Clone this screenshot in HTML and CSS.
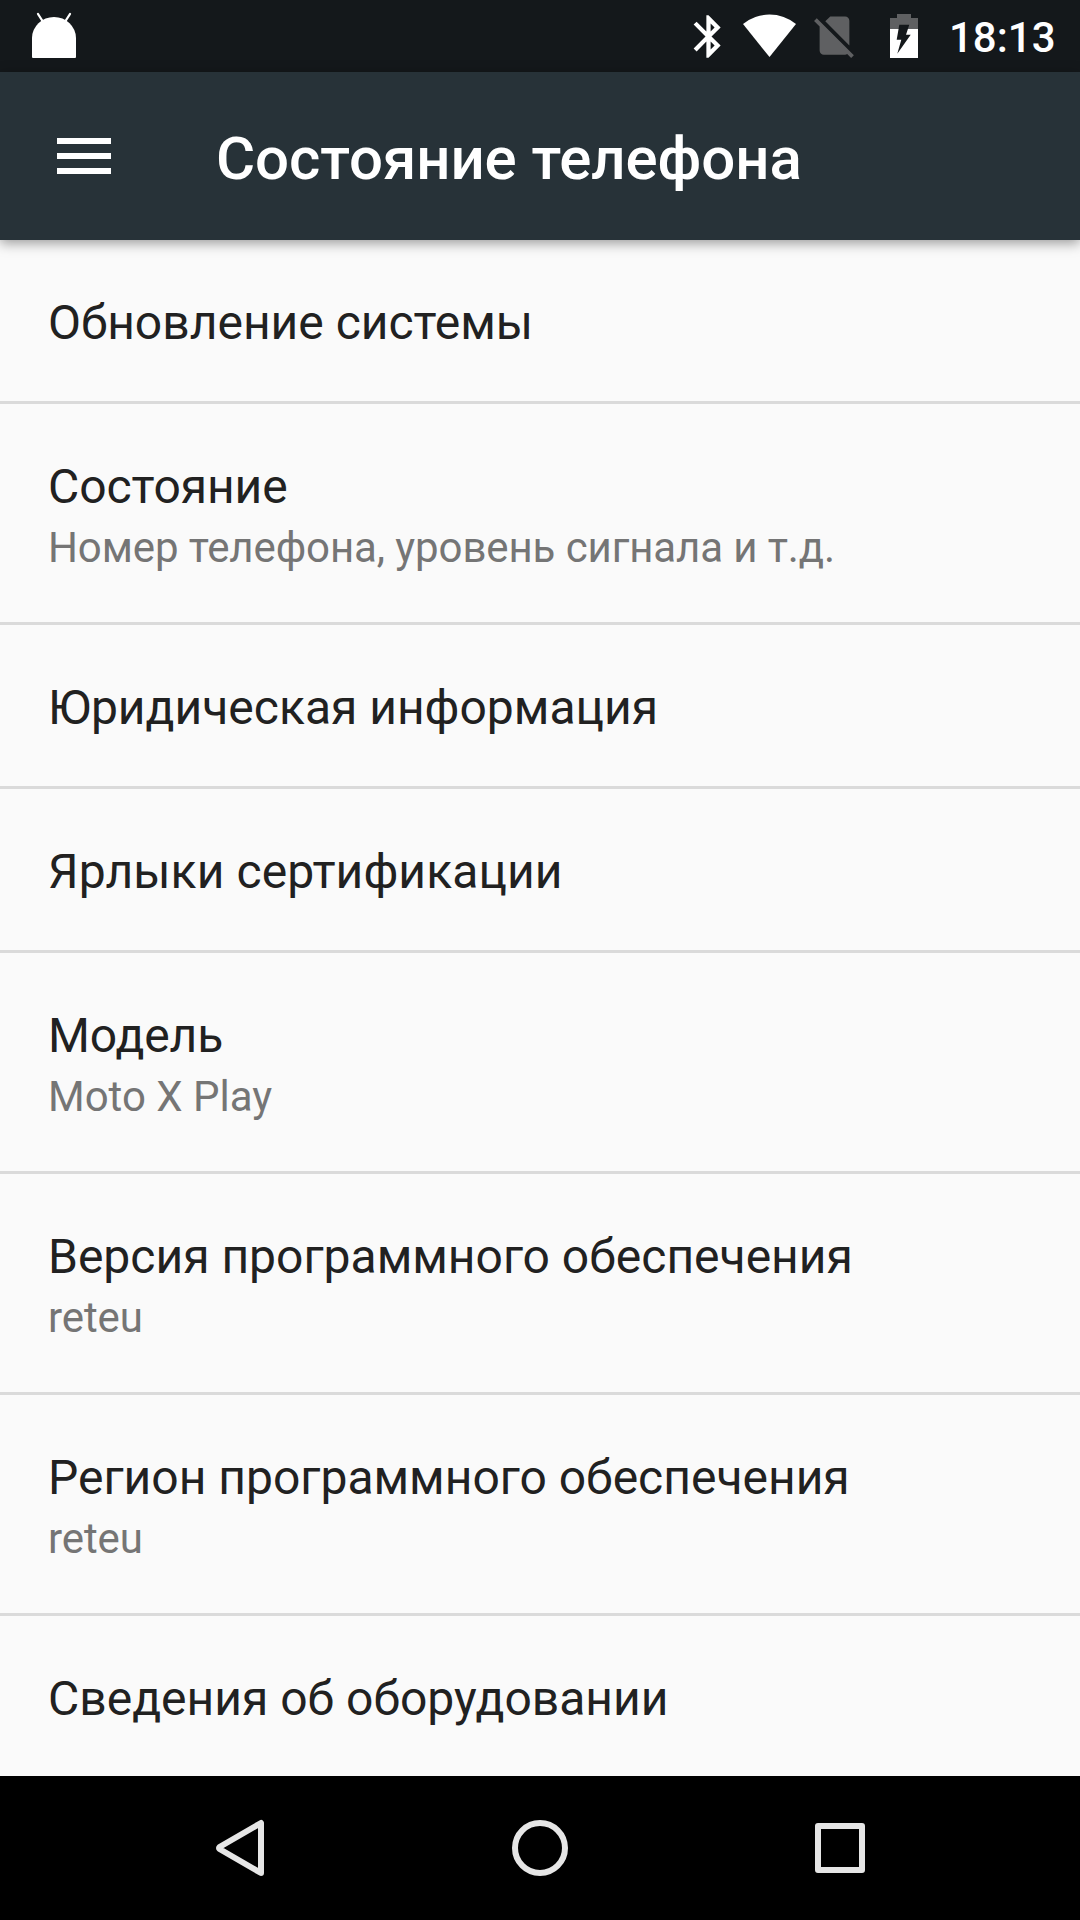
FILE: index.html
```html
<!DOCTYPE html>
<html lang="ru">
<head>
<meta charset="utf-8">
<title>Состояние телефона</title>
<link rel="stylesheet" href="styles.css">
</head>
<body>
<div class="screen">
  <div class="status-bar">
    <svg class="status-icon android" width="44" height="72" viewBox="32 0 44 72">
      <path d="M32 57V38a22 21 0 0 1 44 0V57a1 1 0 0 1-1 1H33a1 1 0 0 1-1-1z" fill="#fff"/>
      <path d="M38 14l4.500 7M70 14l-4.500 7" stroke="#fff" stroke-width="2.300" stroke-linecap="round"/>
    </svg>
    <div class="indicators">
      <svg class="status-icon bluetooth" width="51" height="72" viewBox="683 0 51 72">
        <path transform="translate(683 11) scale(2.125)" fill="#fff" d="M17.71 7.710L12 2h-1v7.590L6.410 5 5 6.410 10.590 12 5 17.590 6.410 19 11 14.410V22h1l5.710-5.710-4.300-4.290 4.300-4.290zM13 5.830l1.880 1.880L13 9.590V5.830zm1.880 10.460L13 18.170v-3.760l1.880 1.880z"/>
      </svg>
      <svg class="status-icon wifi" width="54" height="72" viewBox="743 0 54 72">
        <path d="M743 24A42 42 0 0 1 796 24L769.500 57z" fill="#fff"/>
      </svg>
      <svg class="status-icon no-sim" width="51" height="72" viewBox="809 0 51 72">
        <path transform="translate(809 10) scale(2.125)" fill="#5f6062" d="M18.990 5c0-1.100-.89-2-1.990-2h-7L7.660 5.340 19 16.680 18.990 5zM3.650 3.880L2.380 5.150 5 7.770V19c0 1.100.9 2 2.010 2H17c.35 0 .67-.1.96-.26l1.880 1.880 1.270-1.270L3.650 3.880z"/>
      </svg>
      <svg class="status-icon battery" width="30" height="72" viewBox="889 0 30 72">
        <path d="M890 29V18h7v-4h14v4h7v11z" fill="#5f6062"/>
        <path d="M890 29h28v29h-28z" fill="#fff"/>
        <path d="M899.300 24.700h10l-3.300 10h4.700l-13.400 19 4-14h-4.600z" fill="#14181b"/>
      </svg>
      <span class="clock">18:13</span>
    </div>
  </div>
  <header class="app-bar">
    <div class="menu"><i></i><i></i><i></i></div>
    <h1 class="title">Состояние телефона</h1>
  </header>
  <main class="list">
    <div class="item"><div class="name">Обновление системы</div></div>
    <div class="item"><div class="name snug">Состояние</div><div class="summary snug">Номер телефона, уровень сигнала и т.д.</div></div>
    <div class="item"><div class="name">Юридическая информация</div></div>
    <div class="item"><div class="name loose">Ярлыки сертификации</div></div>
    <div class="item"><div class="name snug">Модель</div><div class="summary">Moto X Play</div></div>
    <div class="item"><div class="name">Версия программного обеспечения</div><div class="summary snug">reteu</div></div>
    <div class="item"><div class="name">Регион программного обеспечения</div><div class="summary snug">reteu</div></div>
    <div class="item"><div class="name">Сведения об оборудовании</div></div>
  </main>
  <nav class="nav-bar">
    <svg width="60" height="60" viewBox="0 0 60 60"><path d="M51 5V55L9.500 31Q8.500 30 9.500 29z" fill="none" stroke="#e6e6e6" stroke-width="6" stroke-linejoin="round"/></svg>
    <svg width="60" height="60" viewBox="0 0 60 60"><circle cx="30" cy="30" r="25" fill="none" stroke="#e6e6e6" stroke-width="6"/></svg>
    <svg width="60" height="60" viewBox="0 0 60 60"><path d="M8 8h44v44H8z" fill="none" stroke="#e6e6e6" stroke-width="6" stroke-linejoin="round"/></svg>
  </nav>
</div>
</body>
</html>
```
FILE: styles.css
```css
body {
  margin: 0;
  font-family: Roboto, "Noto Sans", sans-serif;
}

.screen {
  width: 1080px;
  height: 1920px;
  display: flex;
  flex-direction: column;
  overflow: hidden;
  background: #fafafa;
}

.status-bar {
  height: 72px;
  flex: none;
  display: flex;
  justify-content: space-between;
  padding-left: 32px;
  background: #14181b;
}

.status-icon {
  display: block;
  flex: none;
}

.indicators {
  width: 397px;
  display: flex;
}

.bluetooth { margin-right: 9px; }
.wifi { margin-right: 12px; }
.no-sim { margin-right: 29px; }
.battery { margin-right: 30px; }

.clock {
  padding-top: 13px;
  font-size: 42px;
  line-height: 49px;
  font-weight: 500;
  color: #fff;
}

.app-bar {
  position: relative;
  z-index: 1;
  height: 168px;
  flex: none;
  display: flex;
  box-sizing: border-box;
  padding-left: 57px;
  background: #273238;
  box-shadow: 0 3px 12px rgba(0, 0, 0, 0.4);
}

.menu {
  width: 54px;
  margin-right: 105px;
  padding-top: 66px;
  display: flex;
  flex-direction: column;
  gap: 9px;
}

.menu i {
  height: 6px;
  background: #fff;
}

.title {
  margin: 0;
  padding-top: 51px;
  font-size: 60px;
  line-height: 71px;
  font-weight: 500;
  letter-spacing: -0.06px;
  color: #fff;
}

.list {
  flex: 1;
  min-height: 0;
}

.item {
  height: 107px;
  padding: 54px 48px 0;
}

.item:has(.summary) {
  height: 164px;
}

.item + .item {
  border-top: 3px solid #dadada;
}

.name {
  font-size: 48px;
  line-height: 57px;
  color: #212121;
}

.summary {
  margin-top: 8px;
  font-size: 42px;
  line-height: 49px;
  color: #757575;
}

.snug {
  letter-spacing: -0.1px;
}

.loose {
  letter-spacing: 0.1px;
}

.nav-bar {
  height: 144px;
  flex: none;
  display: flex;
  justify-content: center;
  align-items: center;
  gap: 240px;
  background: #000;
}
```
